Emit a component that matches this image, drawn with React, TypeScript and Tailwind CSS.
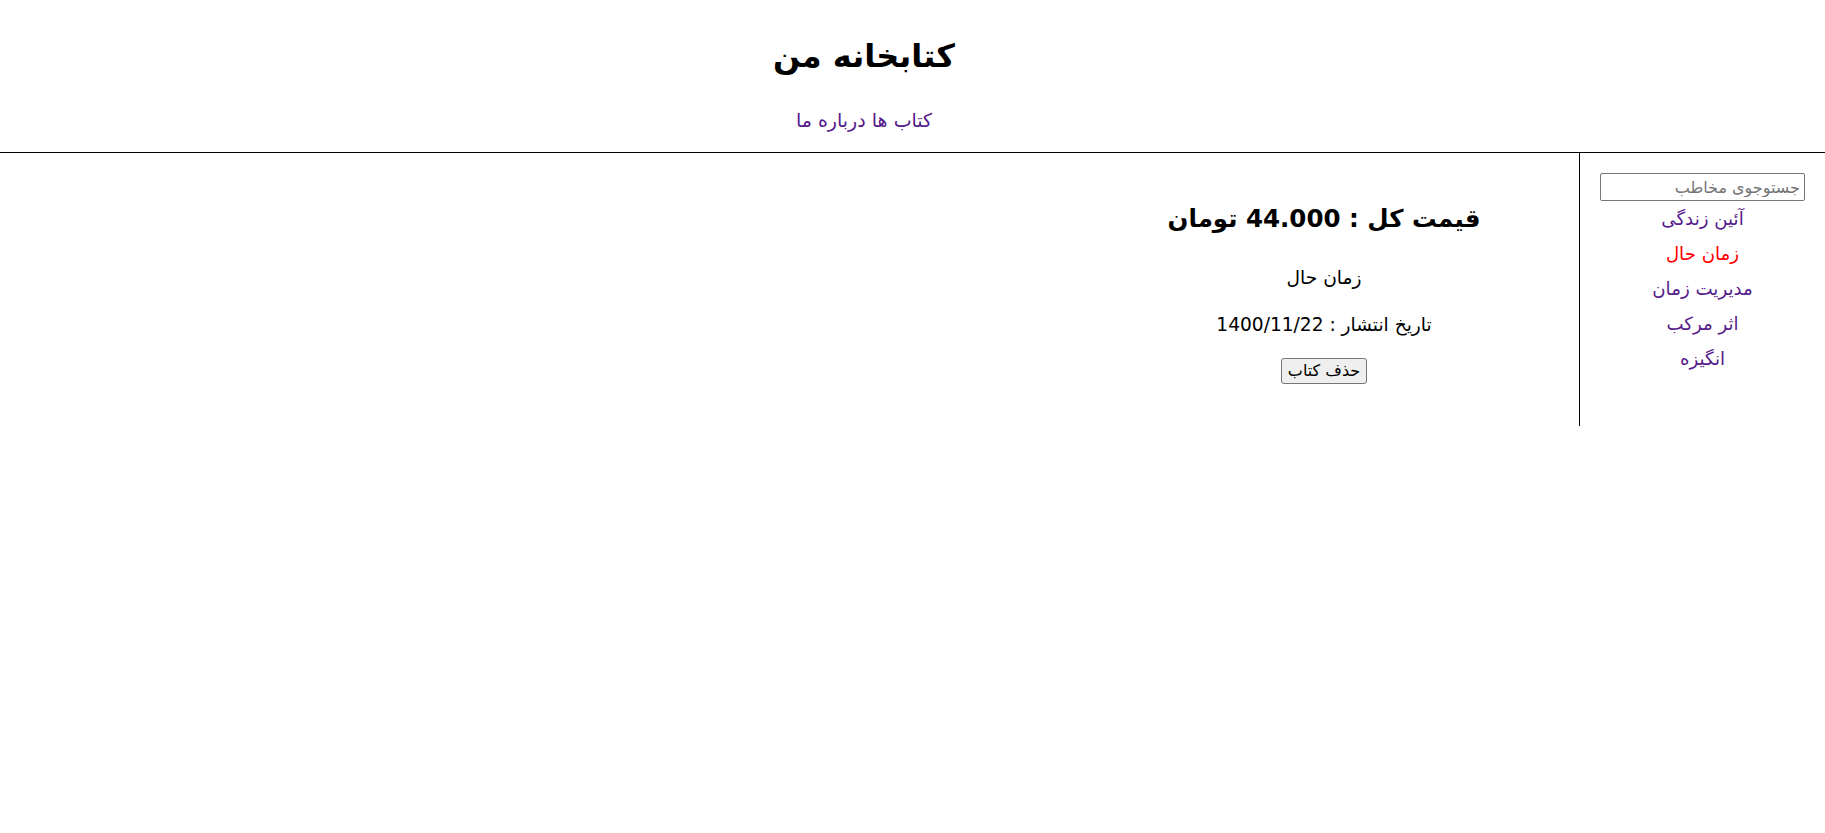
const BOOKS = [
  { id: 1, name: "آئین زندگی" },
  { id: 2, name: "زمان حال" },
  { id: 3, name: "مدیریت زمان" },
  { id: 4, name: "اثر مرکب" },
  { id: 5, name: "انگیزه" },
];

const font = "font-['DejaVu_Sans',sans-serif]";

export default function App() {
  const activeId = 2;
  return (
    <div dir="rtl" className={`${font} text-black bg-white min-h-[833px] text-[18.6px]`}>
      {/* ---------- سربرگ ---------- */}
      <div className="border-b border-black pr-[97px] pb-[21px] pt-[36px] text-center">
        <h1 className="m-0 text-[32px] font-bold leading-[40px]">کتابخانه من</h1>
        <nav className="mt-[33px] leading-[22px] text-[19px]">
          <a href="#" className="text-[#551a8b]">کتاب ها</a>{" "}
          <a href="#" className="text-[#551a8b]">درباره ما</a>
        </nav>
      </div>

      {/* ---------- بدنه ---------- */}
      <div className="flex">
        <nav className="w-[246px] shrink-0 border-l border-black pt-5 pb-[56px] flex flex-col items-center">
          <input
            placeholder="جستوجوی مخاطب"
            className="w-[205px] h-[28px] border border-[#767676] rounded-[2px] px-1 text-[16px] placeholder:text-[#757575]"
          />
          <div className="mt-[7px] flex flex-col items-center gap-[13px]">
            {BOOKS.map(b => (
              <a key={b.id} href="#" className={`block leading-[22px] text-[18.2px] ${b.id === activeId ? "text-[#ff0000]" : "text-[#551a8b]"}`}>{b.name}</a>
            ))}
          </div>
        </nav>

        <main className="w-[510px] pt-[50px] text-center flex flex-col items-center">
          <h2 className="m-0 text-[24.5px] font-bold leading-[32px]">قیمت کل : 44.000 تومان</h2>
          <p className="mt-[32px] leading-[22px]">زمان حال</p>
          <p className="mt-[25px] leading-[22px]">تاریخ انتشار : 1400/11/22</p>
          <button className="mt-[22px] h-[26px] px-[6px] bg-[#efefef] border border-[#767676] rounded-[3px] text-[16px] leading-none">حذف کتاب</button>
        </main>
      </div>
    </div>
  );
}
